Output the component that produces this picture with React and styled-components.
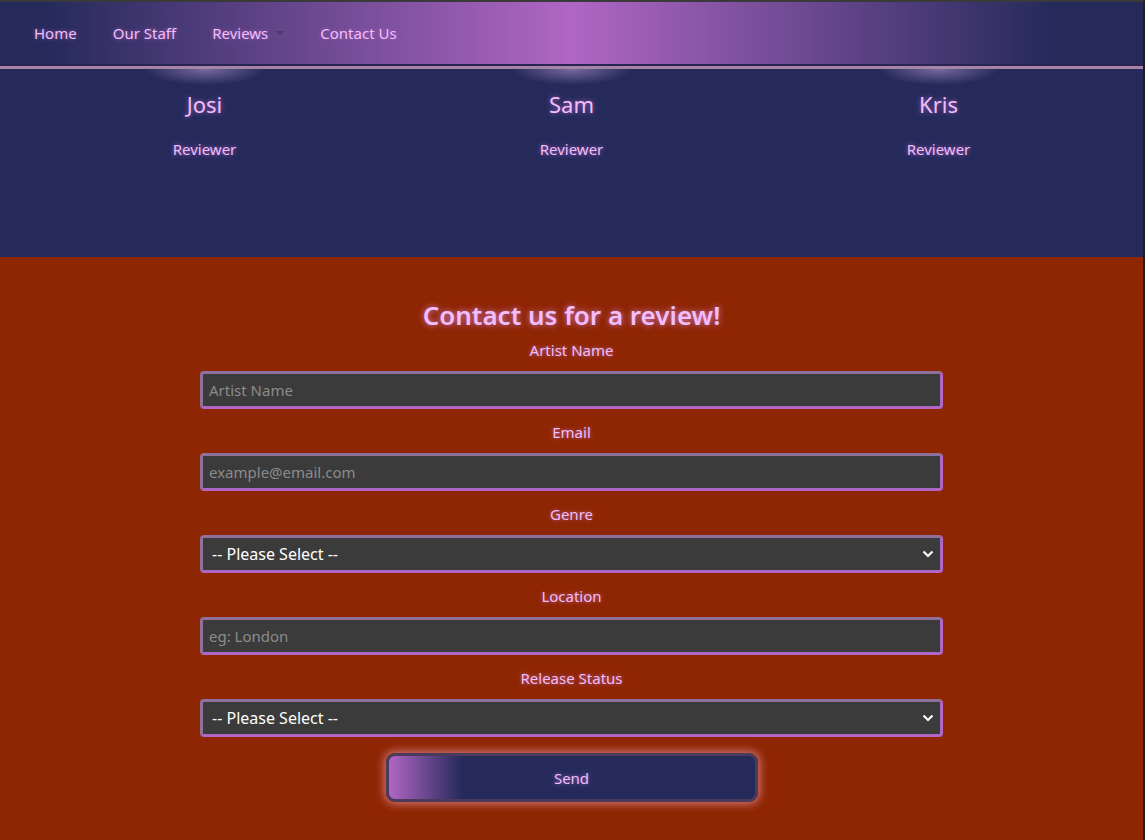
import React from "react";
import styled, { createGlobalStyle } from "styled-components";

const GlobalStyle = createGlobalStyle`
  body {
    margin: 0;
    background: #252a5b;
    font-family: "Noto Sans", "Open Sans", sans-serif;
  }
`;

const Page = styled.div`
  border-top: 2px solid #3a3a3a;
  border-right: 2px solid #1e1e22;
  min-height: 838px;
  background: #8e2503;
`;

const Nav = styled.nav`
  height: 62px;
  display: flex;
  align-items: center;
  gap: 36px;
  padding: 0 34px;
  background: linear-gradient(to right, #252a5b 4%, #b066c4 50%, #252a5b 92%);
  border-bottom: 2px solid #2a2550;
`;

const NavLink = styled.a`
  color: #f2bdfb;
  font-size: 15px;
  text-decoration: none;
  text-shadow: 0 0 4px rgba(176, 102, 196, 0.8);
  display: flex;
  align-items: center;
  gap: 8px;
`;

const Caret = styled.span`
  width: 0;
  height: 0;
  border-left: 4px solid transparent;
  border-right: 4px solid transparent;
  border-top: 4px solid #4a3a66;
`;

const Rule = styled.div`
  height: 3px;
  background: #a684a8;
`;

const Staff = styled.section`
  background: #252a5b;
  height: 188px;
`;

const StaffGrid = styled.div`
  width: 1101px;
  margin: 0 auto;
  display: grid;
  grid-template-columns: repeat(3, 1fr);
`;

const Member = styled.div`
  display: flex;
  flex-direction: column;
  align-items: center;
`;

const Glow = styled.div`
  width: 120px;
  height: 16px;
  background: radial-gradient(ellipse 50% 100% at 50% 0%, rgba(200, 170, 220, 0.5), rgba(200, 170, 220, 0) 100%);
`;

const Name = styled.h3`
  margin: 4px 0 0;
  font-weight: 400;
  font-size: 22px;
  color: #f2bdfb;
  text-shadow: 0 0 5px rgba(176, 102, 196, 0.9);
`;

const Role = styled.p`
  margin: 20px 0 0;
  font-size: 15px;
  color: #f2bdfb;
  text-shadow: 0 0 5px rgba(176, 102, 196, 0.9);
`;

const Contact = styled.section`
  padding: 40px 0 40px;
  display: flex;
  flex-direction: column;
  align-items: center;
`;

const Title = styled.h2`
  margin: 0 0 7px;
  font-size: 26px;
  font-weight: 600;
  color: #f2bdfb;
  text-shadow: 0 0 6px rgba(230, 150, 255, 0.8);
`;

const Form = styled.form`
  width: 743px;
  display: flex;
  flex-direction: column;
  align-items: center;
`;

const Label = styled.label`
  font-size: 15px;
  color: #f2bdfb;
  text-shadow: 0 0 4px rgba(230, 150, 255, 0.6);
  line-height: 20px;
  margin: 0 0 11px;
`;

const fieldCss = `
  box-sizing: border-box;
  width: 743px;
  height: 38px;
  margin-bottom: 13px;
  background: #3b3b3b;
  border: 3px solid;
  border-color: #8f709b #b066c4 #b066c4 #8f709b;
  border-radius: 4px;
  font-family: "Noto Sans", "Open Sans", sans-serif;
  font-size: 15px;
  outline: none;
`;

const Input = styled.input`
  ${fieldCss}
  padding: 0 6px;
  color: #fff;
  &::placeholder {
    color: #8c8c8c;
  }
`;

const Select = styled.select`
  ${fieldCss}
  padding: 0 9px;
  font-size: 16px;
  color: #fff;
  appearance: none;
  background-image: url("data:image/svg+xml;utf8,<svg xmlns='http://www.w3.org/2000/svg' width='12' height='8' viewBox='0 0 12 8'><path d='M1.5 1.5 6 6l4.5-4.5' fill='none' stroke='white' stroke-width='2.2'/></svg>");
  background-repeat: no-repeat;
  background-position: right 6px center;
`;

const Send = styled.button`
  margin-top: 3px;
  width: 372px;
  height: 49px;
  border: 3px solid #4b3a5c;
  border-radius: 9px;
  background: linear-gradient(to right, #b066c4 0%, #252a5b 20%);
  color: #f2bdfb;
  font-family: "Noto Sans", "Open Sans", sans-serif;
  font-size: 15px;
  text-shadow: 0 0 4px rgba(230, 150, 255, 0.6);
  box-shadow: 0 0 10px 2px rgba(255, 170, 190, 0.6);
`;

const staff = ["Josi", "Sam", "Kris"];

const fields = [
  { label: "Artist Name", placeholder: "Artist Name" },
  { label: "Email", placeholder: "example@email.com" },
  { label: "Genre", select: true },
  { label: "Location", placeholder: "eg: London" },
  { label: "Release Status", select: true },
];

export default function App() {
  return (
    <>
      <GlobalStyle />
      <Page>
        <Nav>
          <NavLink href="#">Home</NavLink>
          <NavLink href="#">Our Staff</NavLink>
          <NavLink href="#">
            Reviews <Caret />
          </NavLink>
          <NavLink href="#">Contact Us</NavLink>
        </Nav>
        <Rule />
        <Staff>
          <StaffGrid>
            {staff.map((n) => (
              <Member key={n}>
                <Glow />
                <Name>{n}</Name>
                <Role>Reviewer</Role>
              </Member>
            ))}
          </StaffGrid>
        </Staff>
        <Contact>
          <Title>Contact us for a review!</Title>
          <Form onSubmit={(e) => e.preventDefault()}>
            {fields.map((f) => (
              <React.Fragment key={f.label}>
                <Label>{f.label}</Label>
                {f.select ? (
                  <Select defaultValue="">
                    <option value="">-- Please Select --</option>
                  </Select>
                ) : (
                  <Input placeholder={f.placeholder} />
                )}
              </React.Fragment>
            ))}
            <Send type="submit">Send</Send>
          </Form>
        </Contact>
      </Page>
    </>
  );
}
